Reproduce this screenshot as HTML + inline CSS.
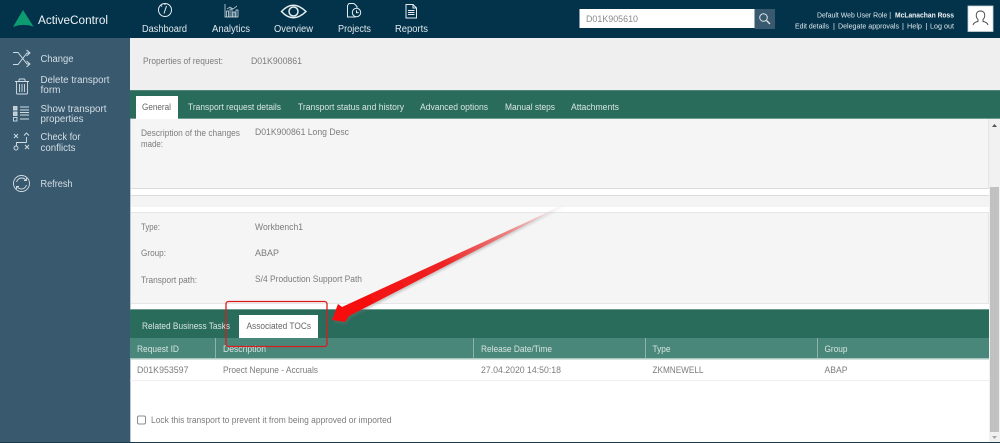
<!DOCTYPE html>
<html><head><meta charset="utf-8"><style>
html,body{margin:0;padding:0;width:1000px;height:443px;overflow:hidden;background:#fff}
svg{display:block;font-family:"Liberation Sans",sans-serif}
text{font-size:9px;fill:#7c7c7c}
.w{fill:#dfe7eb}
.n{font-size:10px;fill:#dfe7eb}
.s{font-size:10px;fill:#d3dee4}
.t{font-size:9px;fill:#d8e5e1}
.i{fill:none;stroke:#d3dee4;stroke-width:.9}
.h{fill:none;stroke:#e6edf0;stroke-width:1}
</style></head><body>
<svg width="1000" height="443" viewBox="0 0 1000 443" xmlns="http://www.w3.org/2000/svg">
<defs>
<linearGradient id="ag" gradientUnits="userSpaceOnUse" x1="345" y1="315" x2="565" y2="204">
<stop offset="0" stop-color="#f70a0a"/><stop offset=".45" stop-color="#ee2424"/><stop offset=".75" stop-color="#eb8585"/><stop offset="1" stop-color="#f3dcdc" stop-opacity=".3"/>
</linearGradient>
<filter id="b" filterUnits="userSpaceOnUse" x="0" y="0" width="1000" height="443"><feGaussianBlur stdDeviation="0.32"/></filter>
<filter id="sh" x="-10%" y="-10%" width="120%" height="120%"><feGaussianBlur stdDeviation="1.2"/></filter>
</defs>
<!-- backgrounds -->
<rect width="1000" height="443" fill="#fff"/>
<rect y="38" width="130" height="405" fill="#39596f"/>
<rect width="1000" height="38" fill="#03334b"/>
<rect x="130" y="38" width="870" height="52" fill="#efefef"/>
<rect x="130" y="90" width="870" height="29" fill="#296c5c"/>
<rect x="130" y="90" width="870" height="1" fill="#4d8576"/>
<rect x="130" y="118" width="870" height="1" fill="#6f9c90"/>
<rect x="136" y="96" width="42" height="23" fill="#fff"/>
<rect x="130" y="119" width="859" height="69" fill="#f5f5f5"/>
<rect x="130" y="188" width="859" height="1" fill="#dcdcdc"/>
<rect x="130" y="189" width="859" height="6" fill="#fff"/>
<rect x="130" y="195" width="859" height="1" fill="#dcdcdc"/>
<rect x="130" y="196" width="859" height="11" fill="#f4f4f4"/>
<rect x="130" y="207" width="859" height="5" fill="#fff"/>
<rect x="130" y="212" width="859" height="91" fill="#f5f5f5"/>
<rect x="130" y="212" width="859" height="1" fill="#e6e6e6"/>
<rect x="130" y="303" width="859" height="1" fill="#e6e6e6"/>
<rect x="988" y="119" width="1" height="69" fill="#e4e4e4"/>
<rect x="988" y="212" width="1" height="91" fill="#e4e4e4"/>
<rect x="130" y="119" width="1" height="324" fill="#b9c4cc"/>
<rect x="130" y="309" width="859" height="29" fill="#296c5c"/>
<rect x="130" y="309" width="859" height="1" fill="#6f9c90"/>
<rect x="130" y="338" width="859" height="20" fill="#48877a"/>
<rect x="130" y="358" width="859" height="1.500" fill="#a9c6bf"/>
<rect x="215" y="338" width="1" height="20" fill="#8db3a9"/>
<rect x="473" y="338" width="1" height="20" fill="#8db3a9"/>
<rect x="645" y="338" width="1" height="20" fill="#8db3a9"/>
<rect x="817" y="338" width="1" height="20" fill="#8db3a9"/>
<rect x="130" y="380" width="859" height="1" fill="#efefef"/>
<rect x="239" y="315" width="79" height="23" fill="#fff"/>
<rect y="442" width="1000" height="1" fill="#1c3a4a"/>
<!-- scrollbar -->
<rect x="989" y="119" width="11" height="323" fill="#f1f1f1"/>
<rect x="990" y="187" width="9" height="245" fill="#c1c1c1"/>
<path d="M992 127l2.500-3 2.500 3z" fill="#555"/>
<path d="M992 436l2.500 3 2.500-3z" fill="#a8a8a8"/>
<rect x="579.500" y="9" width="175" height="19" fill="#fff"/>
<rect x="754.500" y="9" width="20.500" height="20" fill="#39596f"/>
<rect x="968" y="6" width="25" height="25.500" fill="#fff" stroke="#c9d3d9" stroke-width=".8"/>
<g filter="url(#b)">
<!-- logo -->
<path d="M23 10 L33.500 26.500 Q23 23 13 27 Z" fill="#0f9c6f"/>
<text x="38" y="24" textLength="70" lengthAdjust="spacingAndGlyphs" style="font-size:11.500px;fill:#eef3f5">ActiveControl</text>
<!-- nav icons -->
<g class="h">
<circle cx="165" cy="10" r="6.500"/><path d="M166.500 6L164 13.500M161 5.500l1 1M165 3.500v1.500"/>
<path d="M225 4v13h13M226.500 17v-6h2v6M230 17v-8h2v8M233 17v-5h2v5M236 17v-7h2v7M227 9l3-2 3 2 4-3" stroke-width=".7"/>
<path d="M281.500 11.500Q293 -1 306 11.500Q293 24 281.500 11.500Z" stroke-width="1.500"/><circle cx="293.500" cy="11.500" r="4.500" stroke-width="1.500"/>
<path d="M354 3.500h-5l-1.500 2v11.500h8M354 3.500l3 3v1.500"/><circle cx="356.500" cy="12.500" r="4.200"/><path d="M356.500 10.300v2.300h2.200"/>
<path d="M406 4.500h7l3.500 3.500v10h-10.500zM413 4.500v3.500h3.500M408 10.500h6.500M408 12.500h6.500M408 14.500h6.500"/>
</g>
<text class="n" x="142" y="32" textLength="45" lengthAdjust="spacingAndGlyphs">Dashboard</text>
<text class="n" x="212" y="32" textLength="38" lengthAdjust="spacingAndGlyphs">Analytics</text>
<text class="n" x="274" y="32" textLength="39" lengthAdjust="spacingAndGlyphs">Overview</text>
<text class="n" x="338" y="32" textLength="33" lengthAdjust="spacingAndGlyphs">Projects</text>
<text class="n" x="395" y="32" textLength="33" lengthAdjust="spacingAndGlyphs">Reports</text>
<!-- search -->
<text x="586" y="22" textLength="52" lengthAdjust="spacingAndGlyphs" style="font-size:9.500px;fill:#8a8a8a">D01K905610</text>
<circle cx="763.500" cy="17.500" r="3.800" fill="none" stroke="#dfe7ec" stroke-width="1"/><path d="M766.500 20.500l3.500 3.500" stroke="#dfe7ec" stroke-width="1.300"/>
<!-- user -->
<text class="w" x="817" y="17.500" textLength="74" lengthAdjust="spacingAndGlyphs" style="font-size:7.500px">Default Web User Role |</text>
<text x="895" y="17.500" textLength="59" lengthAdjust="spacingAndGlyphs" style="font-size:7.500px;font-weight:bold;fill:#f2f5f7">McLanachan Ross</text>
<text class="w" x="795" y="28.500" textLength="34" lengthAdjust="spacingAndGlyphs" style="font-size:7.500px">Edit details</text>
<text class="w" x="833" y="28.500" style="font-size:7.500px">|</text>
<text class="w" x="838" y="28.500" textLength="61" lengthAdjust="spacingAndGlyphs" style="font-size:7.500px">Delegate approvals</text>
<text class="w" x="902" y="28.500" style="font-size:7.500px">|</text>
<text class="w" x="907" y="28.500" textLength="15" lengthAdjust="spacingAndGlyphs" style="font-size:7.500px">Help</text>
<text class="w" x="925.500" y="28.500" style="font-size:7.500px">|</text>
<text class="w" x="930" y="28.500" textLength="24" lengthAdjust="spacingAndGlyphs" style="font-size:7.500px">Log out</text>
<path d="M973 25q1-3 5-3.500v-2q-2.500-2.500-1.500-6q1-2.500 4-2.500t4 2.500q1 3.500-1.500 6v2q4 .5 5 3.500" fill="none" stroke="#444" stroke-width=".9"/>
<!-- sidebar icons -->
<g class="i">
<path d="M13 52.500h5l9 11.500h2.500M13 64.500h5l9-11.500h2.500M26.500 50l3.500 3-3.500 3M26.500 61l3.500 3-3.500 3"/>
<path d="M15 81.500h14M19 81.500v-1.500q0-1 1-1h4q1 0 1 1v1.500M16.500 81.500v11.500q0 1 1 1h9q1 0 1-1v-11.500M19.500 84v8M22 84v8M24.500 84v8"/>
<rect x="13.500" y="106.500" width="3.500" height="3.500" fill="#b9c8d0"/><rect x="13.500" y="112" width="3.500" height="3.500" fill="#b9c8d0"/><rect x="13.500" y="117.500" width="3.500" height="3.500"/>
<path d="M20 107h9M20 110h9M20 112.500h9M20 115h9M20 119h9"/>
<path d="M14 134l4 4M18 134l-4 4M25 145l4 4M29 145l-4 4M26.500 137l0 5.500M24 135.500l2.500-2.500 2.500 2.500M26.500 142.500h-10v4"/><circle cx="16" cy="148" r="2"/>
<circle cx="21.500" cy="183.500" r="8"/><path d="M16.500 182q1.500-4 5-4q3 0 4.500 2.500M26.500 185q-1.500 4-5 4q-3 0-4.500-2.500M24 180.500h2.500v-2.500M19 186.500h-2.500v2.500"/>
</g>
<!-- sidebar text -->
<text class="s" x="40.500" y="62" textLength="33" lengthAdjust="spacingAndGlyphs">Change</text>
<text class="s" x="40.500" y="83" textLength="69" lengthAdjust="spacingAndGlyphs">Delete transport</text>
<text class="s" x="40.500" y="93" textLength="20" lengthAdjust="spacingAndGlyphs">form</text>
<text class="s" x="40.500" y="112" textLength="66" lengthAdjust="spacingAndGlyphs">Show transport</text>
<text class="s" x="40.500" y="122" textLength="43" lengthAdjust="spacingAndGlyphs">properties</text>
<text class="s" x="40.500" y="140" textLength="40" lengthAdjust="spacingAndGlyphs">Check for</text>
<text class="s" x="40.500" y="151" textLength="35" lengthAdjust="spacingAndGlyphs">conflicts</text>
<text class="s" x="40.500" y="187" textLength="32" lengthAdjust="spacingAndGlyphs">Refresh</text>
<!-- heading -->
<text x="143" y="64" textLength="80" lengthAdjust="spacingAndGlyphs">Properties of request:</text>
<text x="251" y="64" textLength="51" lengthAdjust="spacingAndGlyphs">D01K900861</text>
<!-- tabs -->
<text x="142" y="110" textLength="29" lengthAdjust="spacingAndGlyphs" style="fill:#666">General</text>
<text class="t" x="188" y="110" textLength="93" lengthAdjust="spacingAndGlyphs">Transport request details</text>
<text class="t" x="298" y="110" textLength="106" lengthAdjust="spacingAndGlyphs">Transport status and history</text>
<text class="t" x="420" y="110" textLength="68" lengthAdjust="spacingAndGlyphs">Advanced options</text>
<text class="t" x="505" y="110" textLength="50" lengthAdjust="spacingAndGlyphs">Manual steps</text>
<text class="t" x="571" y="110" textLength="48" lengthAdjust="spacingAndGlyphs">Attachments</text>
<!-- general -->
<text x="141" y="136" textLength="99" lengthAdjust="spacingAndGlyphs">Description of the changes</text>
<text x="141" y="147" textLength="22" lengthAdjust="spacingAndGlyphs">made:</text>
<text x="255" y="135" textLength="94" lengthAdjust="spacingAndGlyphs">D01K900861 Long Desc</text>
<text x="141" y="230" textLength="19" lengthAdjust="spacingAndGlyphs">Type:</text>
<text x="255" y="230" textLength="48" lengthAdjust="spacingAndGlyphs">Workbench1</text>
<text x="141" y="256" textLength="25" lengthAdjust="spacingAndGlyphs">Group:</text>
<text x="255" y="256" textLength="24" lengthAdjust="spacingAndGlyphs">ABAP</text>
<text x="141" y="283" textLength="56" lengthAdjust="spacingAndGlyphs">Transport path:</text>
<text x="255" y="282" textLength="107" lengthAdjust="spacingAndGlyphs">S/4 Production Support Path</text>
<!-- lower tabs -->
<text class="t" x="142" y="329" textLength="88" lengthAdjust="spacingAndGlyphs">Related Business Tasks</text>
<text x="246.500" y="329" textLength="64.500" lengthAdjust="spacingAndGlyphs" style="fill:#666">Associated TOCs</text>
<!-- table -->
<text class="t" x="137" y="352" textLength="42" lengthAdjust="spacingAndGlyphs">Request ID</text>
<text class="t" x="223" y="352" textLength="43" lengthAdjust="spacingAndGlyphs">Description</text>
<text class="t" x="481" y="352" textLength="71" lengthAdjust="spacingAndGlyphs">Release Date/Time</text>
<text class="t" x="652.500" y="352" textLength="18" lengthAdjust="spacingAndGlyphs">Type</text>
<text class="t" x="824.500" y="352" textLength="23" lengthAdjust="spacingAndGlyphs">Group</text>
<text x="137" y="373" textLength="51.500" lengthAdjust="spacingAndGlyphs">D01K953597</text>
<text x="223" y="373" textLength="95" lengthAdjust="spacingAndGlyphs">Proect Nepune - Accruals</text>
<text x="481" y="373" textLength="80" lengthAdjust="spacingAndGlyphs">27.04.2020 14:50:18</text>
<text x="652.500" y="373" textLength="51" lengthAdjust="spacingAndGlyphs">ZKMNEWELL</text>
<text x="824.500" y="373" textLength="23" lengthAdjust="spacingAndGlyphs">ABAP</text>
<!-- checkbox -->
<rect x="137.500" y="416" width="8" height="8" rx="1.500" fill="#fff" stroke="#8d8d8d"/>
<text x="151" y="423" textLength="240.500" lengthAdjust="spacingAndGlyphs">Lock this transport to prevent it from being approved or imported</text>
<!-- annotations -->
<rect x="226" y="301.500" width="101" height="45" rx="2.500" fill="none" stroke="#d81f1f" stroke-width="1.300"/>
<path d="M332 320L338 304L342 307L564 204L349 316L345 322Z" fill="#777" opacity=".4" filter="url(#sh)" transform="translate(1 2)"/>
<path d="M332 320L338 304L342 307L566 204L349 316L345 322Z" fill="url(#ag)"/>
</g>
</svg>
</body></html>
